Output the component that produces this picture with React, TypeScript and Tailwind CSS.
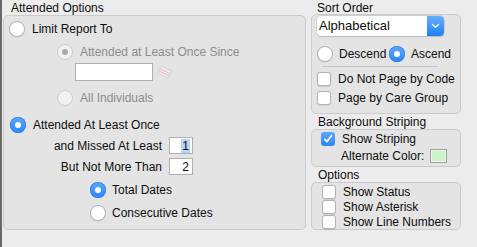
import React from 'react';

const font = { fontFamily: '"Liberation Sans", Arial, sans-serif' };

function Radio({ checked = false, disabled = false }: { checked?: boolean; disabled?: boolean }) {
  if (checked && !disabled) {
    return (
      <span className="flex h-[16px] w-[16px] shrink-0 items-center justify-center rounded-full bg-gradient-to-b from-[#5aa8fb] to-[#2a86f6] shadow-[inset_0_0_0_0.5px_#2a78dd]">
        <span className="h-[6px] w-[6px] rounded-full bg-white" />
      </span>
    );
  }
  if (disabled) {
    return (
      <span className="flex h-[16px] w-[16px] shrink-0 items-center justify-center rounded-full border border-[#cdcdcd] bg-[#f1f1f1]">
        {checked && <span className="h-[6px] w-[6px] rounded-full bg-[#a9a9a9]" />}
      </span>
    );
  }
  return <span className="h-[16px] w-[16px] shrink-0 rounded-full border border-[#b3b3b3] bg-white shadow-[0_0.5px_1px_rgba(0,0,0,0.12)]" />;
}

function Check({ checked = false }: { checked?: boolean }) {
  if (checked) {
    return (
      <span className="flex h-[14px] w-[14px] shrink-0 items-center justify-center rounded-[3px] bg-gradient-to-b from-[#5aa8fb] to-[#2a86f6]">
        <svg width="10" height="10" viewBox="0 0 10 10">
          <path d="M1.8 5.4 L4 7.6 L8.4 1.8" fill="none" stroke="white" strokeWidth="1.7" strokeLinecap="round" strokeLinejoin="round" />
        </svg>
      </span>
    );
  }
  return <span className="h-[14px] w-[14px] shrink-0 rounded-[3px] border border-[#b3b3b3] bg-white shadow-[0_0.5px_1px_rgba(0,0,0,0.1)]" />;
}

function CalendarIcon() {
  return (
    <svg width="17" height="14" viewBox="0 0 17 14" className="ml-[3px] opacity-40">
      <g transform="rotate(25 8.5 7)">
        <rect x="2.5" y="3" width="12" height="8" fill="#f4f4f4" stroke="#b8b8b8" strokeWidth="0.8" />
        <line x1="3" y1="6" x2="14" y2="6" stroke="#e08080" strokeWidth="0.8" />
        <line x1="3" y1="8.5" x2="14" y2="8.5" stroke="#e08080" strokeWidth="0.8" />
      </g>
    </svg>
  );
}

export default function App() {
  return (
    <div className="flex h-[247px] w-[477px] bg-[#ececec] text-[12px] leading-[14px] text-[#0d0d0d]" style={font}>
      <div className="w-[2px] shrink-0 bg-[#6a6a6a]" />
      {/* Attended Options */}
      <div className="ml-[1px] flex w-[303px] flex-col">
        <div className="h-[15px] pl-[8px] pt-[1px]">Attended Options</div>
        <div className="flex h-[215px] flex-col rounded-[5px] border border-[#cbcbcb] bg-[#e4e4e4]">
          <div className="mt-[5px] flex h-[16px] items-center gap-[7px] pl-[5px]">
            <Radio />
            <span>Limit Report To</span>
          </div>
          <div className="mt-[7px] flex h-[16px] items-center gap-[7px] pl-[53px] text-[#8c8c8c]">
            <Radio disabled checked />
            <span>Attended at Least Once Since</span>
          </div>
          <div className="mt-[3px] flex h-[18px] items-center pl-[71px]">
            <div className="h-[18px] w-[78px] border border-[#b0b0b0] bg-white" />
            <CalendarIcon />
          </div>
          <div className="mt-[9px] flex h-[16px] items-center gap-[7px] pl-[53px] text-[#8c8c8c]">
            <Radio disabled />
            <span>All Individuals</span>
          </div>
          <div className="mt-[11px] flex h-[16px] items-center gap-[7px] pl-[6px]">
            <Radio checked />
            <span>Attended At Least Once</span>
          </div>
          <div className="mt-[4px] flex h-[17px] w-[189px] items-center justify-end gap-[7px]">
            <span>and Missed At Least</span>
            <div className="flex h-[17px] w-[24px] items-center justify-end border border-[#b0b0b0] bg-white pr-[2px]">
              <span className="bg-[#b4d6fc] px-[1px]">1</span>
            </div>
          </div>
          <div className="mt-[4px] flex h-[17px] w-[189px] items-center justify-end gap-[7px]">
            <span>But Not More Than</span>
            <div className="flex h-[17px] w-[24px] items-center justify-end border border-[#b0b0b0] bg-white pr-[3px]">
              <span>2</span>
            </div>
          </div>
          <div className="mt-[7px] flex h-[16px] items-center gap-[6px] pl-[86px]">
            <Radio checked />
            <span>Total Dates</span>
          </div>
          <div className="mt-[7px] flex h-[16px] items-center gap-[6px] pl-[86px]">
            <Radio />
            <span>Consecutive Dates</span>
          </div>
        </div>
      </div>

      {/* Right column */}
      <div className="ml-[5px] flex w-[150px] flex-col">
        <div className="h-[14px] pl-[6px] pt-[1px]">Sort Order</div>
        <div className="flex h-[100px] flex-col rounded-[5px] border border-[#cbcbcb] bg-[#e4e4e4]">
          <div className="ml-[5px] mt-[1px] flex h-[20px] w-[127px] overflow-hidden rounded-[4px] bg-white shadow-[0_0_0_0.5px_#b9b9b9,0_1px_1px_rgba(0,0,0,0.15)]">
            <span className="flex flex-1 items-center pl-[2px] text-[13px]">Alphabetical</span>
            <span className="flex w-[17px] items-center justify-center bg-gradient-to-b from-[#63adfa] to-[#1b80f7]">
              <svg width="9" height="6" viewBox="0 0 9 6">
                <path d="M1.5 1.5 L4.5 4.3 L7.5 1.5" fill="none" stroke="white" strokeWidth="1.4" strokeLinecap="round" strokeLinejoin="round" />
              </svg>
            </span>
          </div>
          <div className="ml-[5px] mt-[10px] flex h-[16px] items-center">
            <Radio />
            <span className="ml-[6px] w-[50px]">Descend</span>
            <Radio checked />
            <span className="ml-[6px]">Ascend</span>
          </div>
          <div className="ml-[11px] mt-[4px] h-[1px] w-[114px] bg-[#c4c4c4]" />
          <div className="ml-[5px] mt-[5px] flex h-[14px] items-center gap-[7px]">
            <Check />
            <span>Do Not Page by Code</span>
          </div>
          <div className="ml-[5px] mt-[5px] flex h-[14px] items-center gap-[7px]">
            <Check />
            <span>Page by Care Group</span>
          </div>
        </div>

        <div className="h-[15px] pl-[7px] pt-[1px]">Background Striping</div>
        <div className="flex h-[38px] flex-col rounded-[5px] border border-[#cbcbcb] bg-[#e4e4e4]">
          <div className="ml-[9px] mt-[2px] flex h-[14px] items-center gap-[7px]">
            <Check checked />
            <span>Show Striping</span>
          </div>
          <div className="ml-[29px] mt-[2px] flex h-[15px] items-center gap-[6px]">
            <span>Alternate Color:</span>
            <span className="h-[14px] w-[17px] border border-[#9f9f9f] bg-[#c9f6c9] shadow-[inset_0_0_0_1px_#f2f2f2]" />
          </div>
        </div>

        <div className="h-[15px] pl-[7px] pt-[1px]">Options</div>
        <div className="flex h-[48px] flex-col rounded-[5px] border border-[#cbcbcb] bg-[#e4e4e4]">
          <div className="ml-[10px] mt-[2px] flex h-[14px] items-center gap-[7px]">
            <Check />
            <span>Show Status</span>
          </div>
          <div className="ml-[10px] mt-[1px] flex h-[14px] items-center gap-[7px]">
            <Check />
            <span>Show Asterisk</span>
          </div>
          <div className="ml-[10px] mt-[1px] flex h-[14px] items-center gap-[7px]">
            <Check />
            <span>Show Line Numbers</span>
          </div>
        </div>
      </div>
    </div>
  );
}
